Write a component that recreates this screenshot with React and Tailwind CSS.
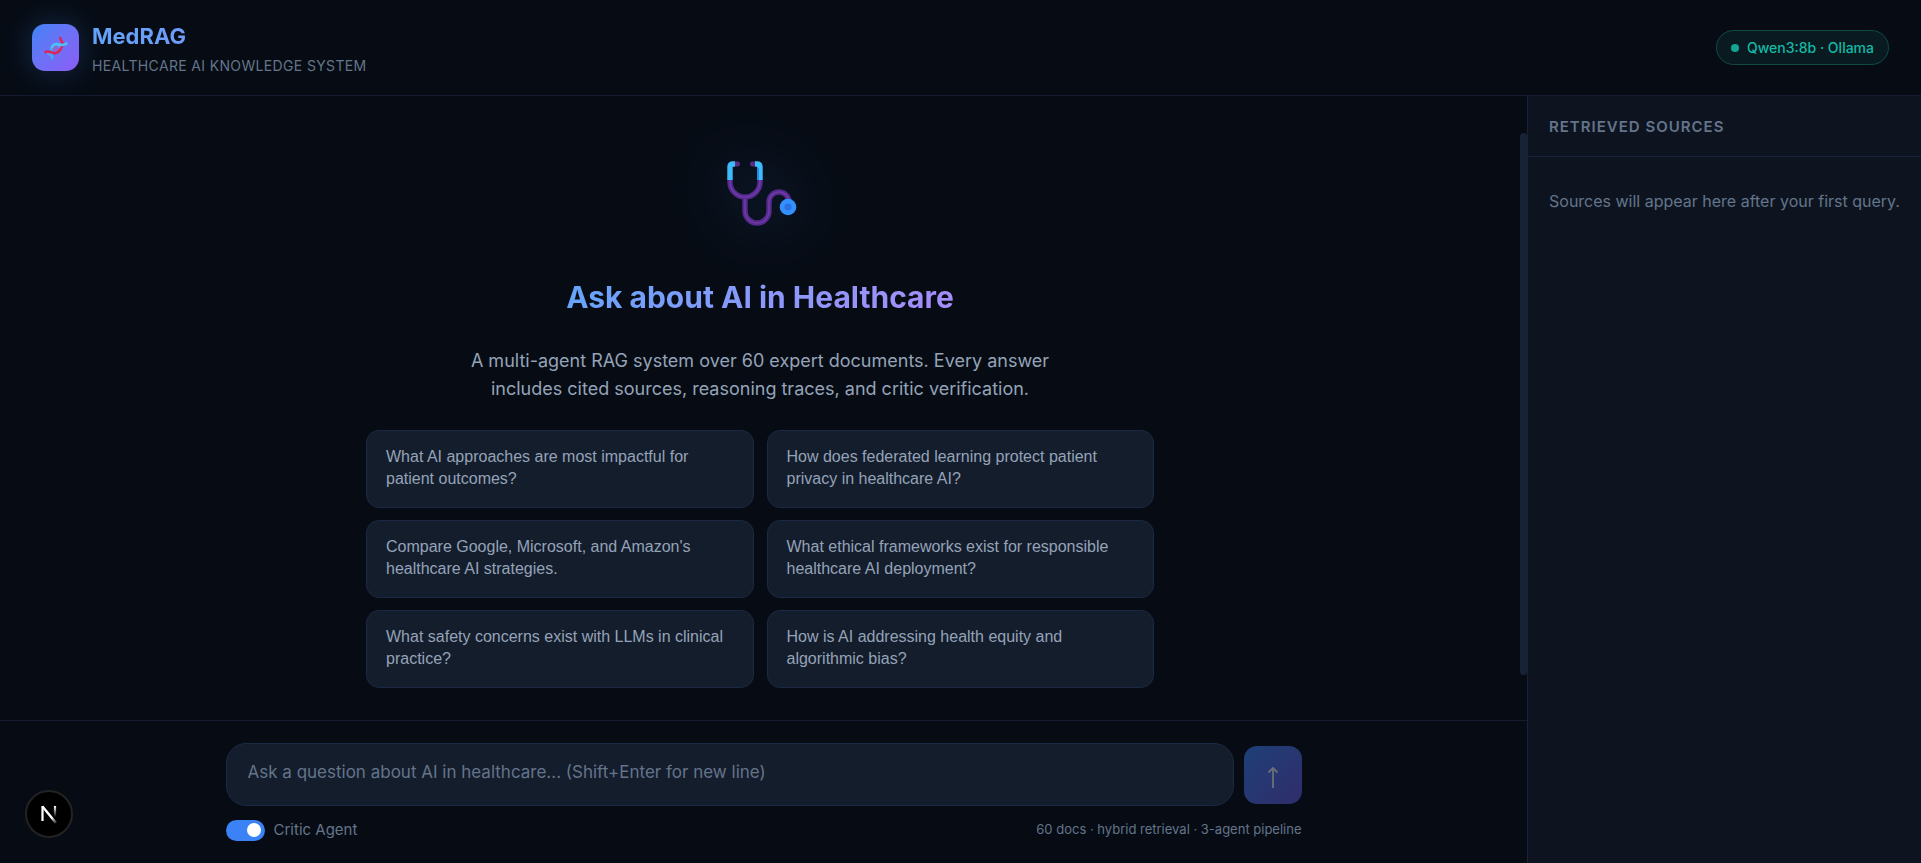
import React, { useState } from "react";

const PROMPTS = [
  "What AI approaches are most impactful for patient outcomes?",
  "How does federated learning protect patient privacy in healthcare AI?",
  "Compare Google, Microsoft, and Amazon's healthcare AI strategies.",
  "What ethical frameworks exist for responsible healthcare AI deployment?",
  "What safety concerns exist with LLMs in clinical practice?",
  "How is AI addressing health equity and algorithmic bias?",
];

function DnaIcon() {
  return (
    <svg width="24" height="24" viewBox="0 0 24 24" fill="none" aria-hidden="true">
      {/* rungs */}
      <path d="M16.5 3l4 4M15.5 5l3 3M10 10l6 5M9 12.500l5 4" stroke="#e8476f" strokeWidth="0.900" />
      <path d="M2.500 16l5 5M5 15.500l3.500 3.500M13 9l4 3" stroke="#5cc8f5" strokeWidth="0.900" />
      {/* strands */}
      <path d="M7.500 23.500C10 20 6 15 7.500 12" stroke="#35b4f0" strokeWidth="2" />
      <path d="M0.500 16.500C5 13 8.500 18.500 12.500 17S16.500 13 18.500 9.500 15 4.500 16.500 1" stroke="#dd2358" strokeWidth="2.400" />
      <path d="M7.500 12.500C8.500 8 12 7.500 15 8.500S20.500 9 23.500 7" stroke="#4cc3f7" strokeWidth="2.600" />
    </svg>
  );
}

function StethoscopeIcon() {
  return (
    <svg
      width="74"
      height="66"
      viewBox="-4 0 74 66"
      fill="none"
      aria-hidden="true"
      className="drop-shadow-[0_0_32px_rgba(59,130,246,0.4)]"
    >
      <g stroke="#552a8c" strokeWidth="5.4">
        <path d="M3 18v3a15 15 0 0 0 30 0v-3" />
        <path d="M18 36v14a12 12 0 0 0 24 0V41a10 10 0 0 1 20 0" />
      </g>
      <g stroke="#6d3aa6" strokeWidth="1.6">
        <path d="M3 19v2a15 15 0 0 0 30 0v-2" />
        <path d="M18 38v12a12 12 0 0 0 24 0V41a10 10 0 0 1 20 0" />
      </g>
      <path d="M8 3h2.500M28 3h-2.500" stroke="#5b2d80" strokeWidth="5" strokeLinecap="round" />
      <path d="M3 19V6q0-3 3-3h2M33 19V6q0-3-3-3h-2" stroke="#3cbcfc" strokeWidth="5.400" />
      <path d="M31.200 19V7" stroke="#2a86f0" strokeWidth="1.500" />
      <circle cx="61" cy="46" r="8.300" fill="#3391ff" />
      <circle cx="61" cy="46" r="3.600" fill="#2f6fe4" />
    </svg>
  );
}

function NextLogo() {
  return (
    <svg width="18" height="20" viewBox="0 0 18 20" fill="none" aria-hidden="true">
      <defs>
        <linearGradient id="nextDiag" x1="9" y1="9" x2="17" y2="20" gradientUnits="userSpaceOnUse">
          <stop offset="0.400" stopColor="#fff" />
          <stop offset="1" stopColor="#fff" stopOpacity="0" />
        </linearGradient>
        <linearGradient id="nextBar" x1="15" y1="2" x2="15" y2="13" gradientUnits="userSpaceOnUse">
          <stop stopColor="#fff" />
          <stop offset="1" stopColor="#fff" stopOpacity="0" />
        </linearGradient>
      </defs>
      <path d="M2.500 17V2" stroke="#fff" strokeWidth="2.200" />
      <path d="M2.500 2.500L16 19" stroke="url(#nextDiag)" strokeWidth="2.400" />
      <path d="M15 2v11" stroke="url(#nextBar)" strokeWidth="2.200" />
    </svg>
  );
}

function Header() {
  return (
    <header className="flex h-24 shrink-0 items-center justify-between border-b border-[#131c2e] px-8">
      <div className="flex items-center gap-[13px]">
        <div className="flex size-[47px] items-center justify-center rounded-[13px] bg-linear-135 from-[#3b82f6] to-[#8b5cf6] shadow-[0_0_32px_rgba(59,130,246,0.25)]">
          <DnaIcon />
        </div>
        <div>
          <h1 className="bg-linear-135 from-[#60a5fa] to-[#818cf8] bg-clip-text text-[22px] leading-[36px] font-bold text-transparent">
            MedRAG
          </h1>
          <p className="text-[14px] leading-[24px] tracking-wide text-[#64748b] uppercase">
            Healthcare AI Knowledge System
          </p>
        </div>
      </div>
      <div className="flex h-[35px] items-center gap-2 rounded-full border border-[#0f4a44] bg-[#091b20] px-[14px] text-[14px] leading-[20px] font-medium text-[#14b8a6]">
        <span className="size-2 rounded-full bg-[#12a594]" />
        Qwen3:8b · Ollama
      </div>
    </header>
  );
}

function Welcome() {
  return (
    <div className="flex flex-1 justify-between overflow-hidden">
      <div className="flex flex-1 flex-col items-center pt-[62px]">
        <div className="flex h-[72px] items-center justify-center">
          <StethoscopeIcon />
        </div>
        <h2 className="mt-[43px] bg-linear-135 from-[#60a5fa] to-[#a78bfa] bg-clip-text text-[30px] leading-[48px] font-bold text-transparent">
          Ask about AI in Healthcare
        </h2>
        <p className="mt-[26px] max-w-[580px] text-center text-[18px] leading-[28px] text-[#94a3b8]">
          A multi-agent RAG system over 60 expert documents. Every answer includes cited sources, reasoning traces, and critic verification.
        </p>
        <div className="mt-[27px] grid w-full max-w-[788px] grid-cols-2 gap-x-[13px] gap-y-3">
          {PROMPTS.map((prompt) => (
            <button
              key={prompt}
              type="button"
              className="rounded-[13px] border border-[#1c2944] bg-[#141d2c] px-[19px] pt-[15px] pb-[17px] text-left font-['Liberation_Sans',Arial,sans-serif] text-[16px] leading-[22px] text-[#94a3b8]"
            >
              {prompt}
            </button>
          ))}
        </div>
      </div>
      {/* scroll thumb */}
      <div className="mt-[37px] h-[542px] w-[7px] rounded-full bg-[#182235]" />
    </div>
  );
}

function Composer() {
  const [critic, setCritic] = useState(true);
  const [question, setQuestion] = useState("");

  return (
    <div className="shrink-0 border-t border-[#131c2e] pt-[22px] pb-5">
      <div className="mx-auto max-w-[1076px]">
        <div className="flex items-center gap-[10px]">
          <textarea
            rows={1}
            aria-label="Question"
            value={question}
            onChange={(e) => setQuestion(e.target.value)}
            placeholder="Ask a question about AI in healthcare... (Shift+Enter for new line)"
            className="h-[63px] flex-1 resize-none rounded-[20px] border border-[#1c2944] bg-[#141d2c] px-[21px] py-[15px] text-[17px] leading-[26px] text-slate-200 outline-none placeholder:text-[#64748b]"
          />
          <button
            type="button"
            aria-label="Send"
            className="flex size-[58px] items-center justify-center rounded-[13px] bg-linear-135 from-[#1d3f78] to-[#2e2d6a] pt-1 text-[#6b7078]"
          >
            <svg width="12" height="22" viewBox="0 0 12 22" fill="none" stroke="currentColor" strokeWidth="1.800" aria-hidden="true">
              <path d="M6 22V2M1.500 6.500L6 2l4.500 4.500" />
            </svg>
          </button>
        </div>
        <div className="mt-[11px] flex items-center justify-between text-[#64748b]">
          <label className="flex items-center gap-[9px] text-[15px] leading-[26px]">
            <input
              type="checkbox"
              role="switch"
              checked={critic}
              onChange={(e) => setCritic(e.target.checked)}
              className="flex h-[21px] w-[39px] appearance-none items-center rounded-full bg-[#334155] px-1 before:size-[14px] before:rounded-full before:bg-white checked:justify-end checked:bg-[#3b82f6]"
            />
            Critic Agent
          </label>
          <span className="text-[13px]">60 docs · hybrid retrieval · 3-agent pipeline</span>
        </div>
      </div>
    </div>
  );
}

function Sources() {
  return (
    <aside className="w-[394px] shrink-0 border-l border-[#17233c] bg-[#0d1420] text-[#64748b]">
      <h2 className="border-b border-[#17233c] px-[21px] pt-[19px] pb-[17px] text-[15px] leading-[24px] font-semibold tracking-[1px] uppercase">
        Retrieved Sources
      </h2>
      <p className="pt-[31px] text-center text-[16px] leading-[26px]">
        Sources will appear here after your first query.
      </p>
    </aside>
  );
}

export default function App() {
  return (
    <div className="flex h-screen flex-col bg-[#070c14] font-[Inter,sans-serif]">
      <Header />
      <div className="flex min-h-0 flex-1">
        <main className="flex min-w-0 flex-1 flex-col">
          <Welcome />
          <Composer />
        </main>
        <Sources />
      </div>
      <button
        type="button"
        aria-label="Open dev tools"
        className="fixed bottom-[25px] left-[25px] flex size-12 items-center justify-center rounded-full border-2 border-[#232323] bg-black"
      >
        <NextLogo />
      </button>
    </div>
  );
}
